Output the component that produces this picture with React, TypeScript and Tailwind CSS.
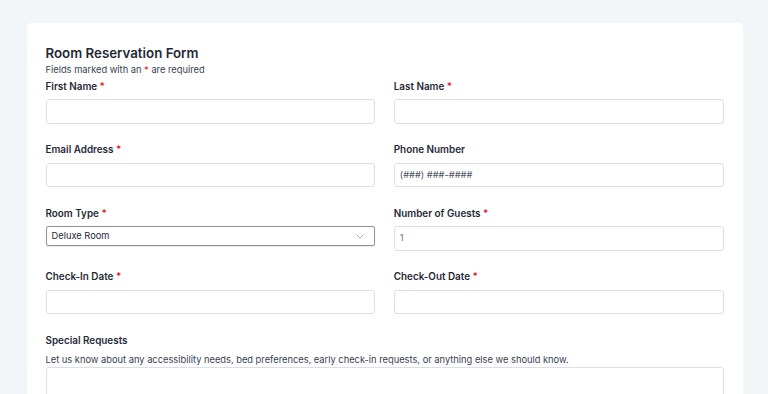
import React from "react";

const Req = () => <span className="text-[#e11d1d]"> *</span>;

function Label({ children, req }: { children: React.ReactNode; req?: boolean }) {
  return (
    <div className="text-[9.9px] leading-[12px] font-semibold text-[#1f2937] mb-[7.5px]">
      {children}
      {req && <Req />}
    </div>
  );
}

function Input({ placeholder, value }: { placeholder?: string; value?: string }) {
  return (
    <div className="h-[24.5px] w-full rounded-[3px] border border-[#dcdfe6] bg-white px-[5px] flex items-center text-[9.3px]">
      {placeholder && <span className="text-[#4b5563]">{placeholder}</span>}
      {value && <span className="text-[#6b7280]">{value}</span>}
    </div>
  );
}

export default function App() {
  return (
    <div
      className="h-[394px] overflow-hidden bg-[#f3f6f9] pt-[23px] pl-[27px]"
      style={{ fontFamily: "Inter, 'Noto Sans', sans-serif" }}
    >
      <div className="bg-white rounded-[5px] pl-[18.5px] pr-[19.5px] pt-[21.5px] pb-[20px] w-[716px]">
        <h1 className="text-[13.3px] leading-[16px] font-semibold text-[#1f2937]">Room Reservation Form</h1>
        <p className="text-[9.3px] leading-[12px] text-[#374151] mt-[3.5px]">
          Fields marked with an <span className="text-[#e11d1d]">*</span> are required
        </p>
        <div className="grid grid-cols-2 gap-x-[18.5px] gap-y-[19.6px] mt-[3.5px] items-start">
          <div>
            <Label req>First Name</Label>
            <Input />
          </div>
          <div>
            <Label req>Last Name</Label>
            <Input />
          </div>
          <div>
            <Label req>Email Address</Label>
            <Input />
          </div>
          <div>
            <Label>Phone Number</Label>
            <Input placeholder="(###) ###-####" />
          </div>
          <div>
            <Label req>Room Type</Label>
            <div className="h-[20px] w-full rounded-[2px] border border-[#8e9196] bg-white pl-[5px] pr-[10px] flex items-center justify-between text-[9.3px] text-[#1f2937] shadow-[0_1px_1px_rgba(0,0,0,0.08)]">
              <span>Deluxe Room</span>
              <svg width="8" height="5" viewBox="0 0 8 5" fill="none">
                <path d="M0.5 0.5l3.5 3.5 3.5-3.5" stroke="#a3a8b0" strokeWidth="0.9" />
              </svg>
            </div>
          </div>
          <div>
            <Label req>Number of Guests</Label>
            <Input value="1" />
          </div>
          <div>
            <Label req>Check-In Date</Label>
            <Input />
          </div>
          <div>
            <Label req>Check-Out Date</Label>
            <Input />
          </div>
          <div className="col-span-2">
            <div className="text-[9.9px] leading-[12px] font-semibold text-[#1f2937]">Special Requests</div>
            <p className="text-[9.3px] leading-[12px] text-[#374151] mt-[8px] mb-[1.5px]">
              Let us know about any accessibility needs, bed preferences, early check-in requests, or anything else we should know.
            </p>
            <div className="h-[80px] w-full rounded-[3px] border border-[#dcdfe6] bg-white" />
          </div>
        </div>
      </div>
    </div>
  );
}
